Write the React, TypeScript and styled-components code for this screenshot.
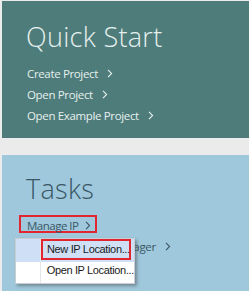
import React from "react";
import styled, { createGlobalStyle } from "styled-components";

const Global = createGlobalStyle`
  html, body { margin: 0; padding: 0; }
  body {
    background: #ebebeb;
    font-family: "Open Sans", "Noto Sans", sans-serif;
    overflow: hidden;
  }
`;

const Page = styled.div`
  display: flex;
  flex-direction: column;
  gap: 17px;
  padding: 1px 0 0 2px;
  width: 247px;
`;

const Panel = styled.section<{ $tone: "teal" | "blue" }>`
  position: relative;
  box-sizing: border-box;
  height: ${(p) => (p.$tone === "teal" ? "137px" : "140px")};
  padding: ${(p) => (p.$tone === "teal" ? "17px" : "15px")} 0 0 25px;
  background: ${(p) => (p.$tone === "teal" ? "#4e7c7a" : "#9fc8dc")};
  color: ${(p) => (p.$tone === "teal" ? "#e6f0ee" : "#3a5765")};
`;

const Title = styled.h1`
  margin: 0 0 0 -1px;
  font-weight: 300;
  font-size: 27px;
  line-height: 37px;
  letter-spacing: 0.3px;
`;

const LinkList = styled.ul`
  list-style: none;
  margin: 8px 0 0 0;
  padding: 0;
  display: flex;
  flex-direction: column;
`;

const LinkItem = styled.li<{ $marked?: boolean }>`
  display: flex;
  align-items: center;
  gap: ${(p) => (p.$marked ? "6px" : "9px")};
  box-sizing: border-box;
  align-self: flex-start;
  white-space: nowrap;
  font-size: 11.5px;
  letter-spacing: ${(p) => (p.$marked ? "-0.5px" : "-0.35px")};
  height: ${(p) => (p.$marked ? "18px" : "21px")};
  margin: ${(p) => (p.$marked ? "0 0 3px -8px" : "0")};
  padding: ${(p) => (p.$marked ? "3px 4px 0 6px" : "0")};
  border: ${(p) => (p.$marked ? "2px solid #e2262f" : "none")};
`;

const Chevron = () => (
  <svg width="6" height="9" viewBox="0 0 6 9" fill="none">
    <path d="M1 0.8 L4.6 4.5 L1 8.2" stroke="currentColor" strokeWidth="1.1" />
  </svg>
);

const Menu = styled.div`
  position: absolute;
  left: 13px;
  top: 83px;
  width: 120px;
  box-sizing: border-box;
  background: #ffffff;
  border: 1px solid #c9ced4;
  box-shadow: 2px 2px 3px rgba(60, 60, 60, 0.45);
  display: flex;
  flex-direction: column;
  font-family: "Liberation Sans", Arial, sans-serif;
  font-size: 11px;
  color: #1a1a1a;
`;

const MenuItem = styled.div<{ $active?: boolean }>`
  display: flex;
  height: ${(p) => (p.$active ? "23px" : "21px")};
  background: ${(p) => (p.$active ? "#cfe0f6" : "transparent")};
`;

const Gutter = styled.div`
  width: 24px;
  border-right: 1px solid #e4e7ea;
`;

const MenuLabel = styled.div<{ $marked?: boolean }>`
  flex: 1;
  box-sizing: border-box;
  height: 21px;
  white-space: nowrap;
  line-height: 13px;
  padding: ${(p) => (p.$marked ? "4px" : "2px")} 0 0 6px;
  margin-right: ${(p) => (p.$marked ? "3px" : "0")};
  outline: ${(p) => (p.$marked ? "2px solid #e2262f" : "none")};
  outline-offset: -2px;
  letter-spacing: -0.35px;
`;

export default function App() {
  return (
    <>
      <Global />
      <Page>
        <Panel $tone="teal">
          <Title>Quick Start</Title>
          <LinkList>
            <LinkItem>Create Project <Chevron /></LinkItem>
            <LinkItem>Open Project <Chevron /></LinkItem>
            <LinkItem>Open Example Project <Chevron /></LinkItem>
          </LinkList>
        </Panel>
        <Panel $tone="blue">
          <Title>Tasks</Title>
          <LinkList>
            <LinkItem $marked>Manage IP <Chevron /></LinkItem>
            <LinkItem>Open Hardware Manager <Chevron /></LinkItem>
          </LinkList>
          <Menu>
            <MenuItem $active>
              <Gutter />
              <MenuLabel $marked>New IP Location...</MenuLabel>
            </MenuItem>
            <MenuItem>
              <Gutter />
              <MenuLabel>Open IP Location...</MenuLabel>
            </MenuItem>
          </Menu>
        </Panel>
      </Page>
    </>
  );
}
